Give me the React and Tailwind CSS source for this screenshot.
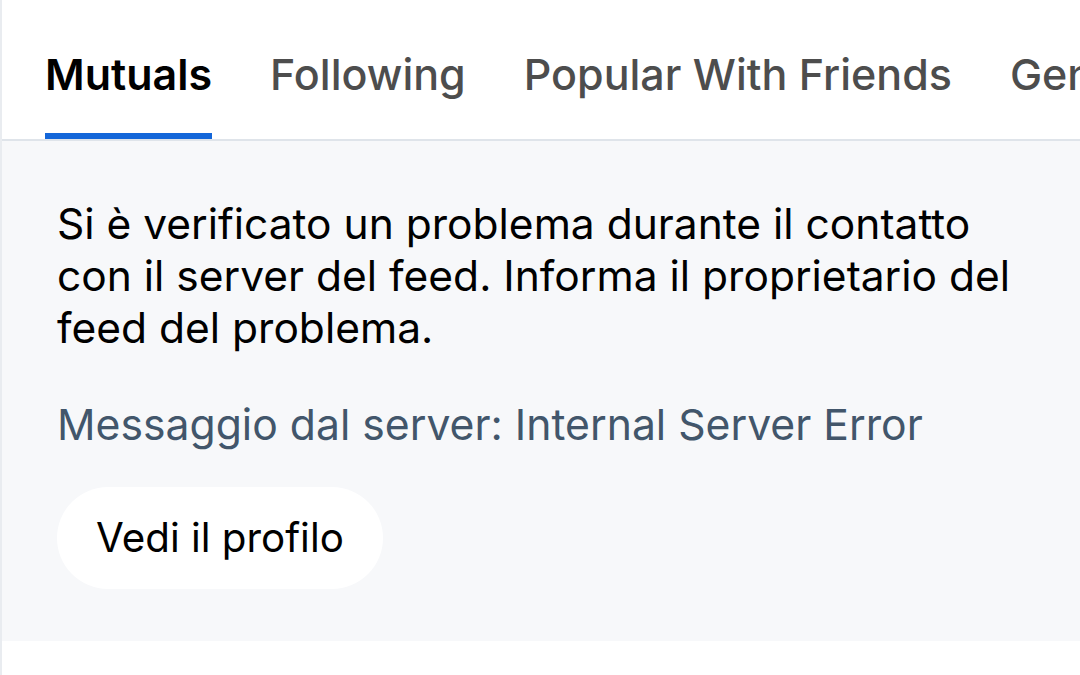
import React from "react";

const tabs = ["Mutuals", "Following", "Popular With Friends", "Generale"];

export default function App() {
  return (
    <div
      className="w-[1080px] h-[675px] overflow-hidden bg-white border-l-2 border-[#e9ecf0]"
      style={{ fontFamily: "Inter, 'Noto Sans', sans-serif" }}
    >
      {/* tab bar */}
      <div className="flex h-[139px] items-end gap-[58px] pl-[43px] whitespace-nowrap overflow-hidden">
        {tabs.map((t, i) => (
          <div key={t} className="flex flex-col shrink-0">
            <span
              className={
                "text-[43px] leading-none pb-[37px] " +
                (i === 0 ? "font-semibold text-black" : "font-medium text-[#4d4d4d]")
              }
            >
              {t}
            </span>
            <div className={"h-[6px] " + (i === 0 ? "bg-[#1466d9]" : "bg-transparent")} />
          </div>
        ))}
      </div>
      <div className="h-[2px] bg-[#dfe4ea]" />

      {/* error panel */}
      <div className="bg-[#f7f8fa] px-[55px] pt-[57px] pb-[52px]">
        <p className="text-[42.5px] leading-[52px] text-black max-w-[972px]">
          Si è verificato un problema durante il contatto con il server del feed. Informa il proprietario del feed del problema.
        </p>
        <p className="mt-[45px] text-[42.7px] leading-[52px] text-[#42566b] whitespace-nowrap">
          Messaggio dal server: Internal Server Error
        </p>
        <button className="mt-[36px] h-[102px] px-[39px] rounded-full bg-white text-[40.3px] text-black">
          Vedi il profilo
        </button>
      </div>
    </div>
  );
}
